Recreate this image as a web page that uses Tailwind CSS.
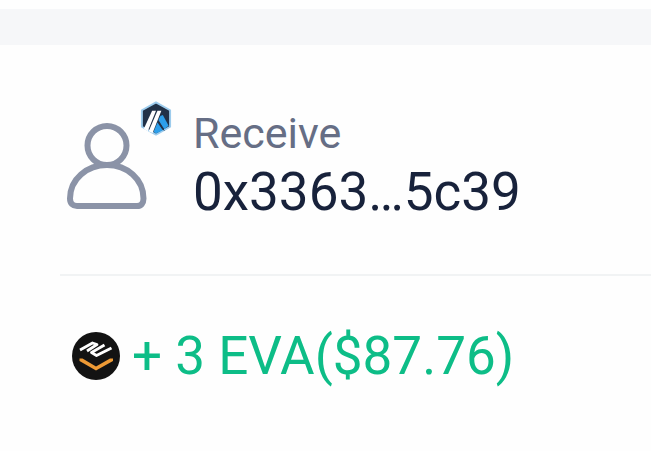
<!DOCTYPE html>
<html lang="en">
<head>
    <meta charset="UTF-8">
    <meta name="viewport" content="width=device-width, initial-scale=1.0">
    <title>Transaction - Receive</title>
    <script src="https://cdn.jsdelivr.net/npm/@tailwindcss/browser@4"></script>
</head>
<body class="bg-[#fefefe] font-['Roboto',sans-serif]">
    <div class="mt-[9px] h-9 bg-[#f6f7f9]"></div>
    <main class="pl-[60px]">
        <section class="flex items-center gap-[46px] border-b-2 border-[#f1f3f4] pl-[7px] pt-[62px] pb-[49px]">
            <div class="relative shrink-0">
                <svg class="h-[87px] w-20" viewBox="0 0 80 87" fill="none" stroke="#8b93a7" stroke-width="6" aria-hidden="true">
                    <circle cx="40" cy="22.500" r="19.500"/>
                    <path d="M40 42C60 42 76.500 56 76.500 75.500C76.500 80.500 74 83 70 83H10C6 83 3 80.500 3 75.500C3 56 20 42 40 42Z"/>
                </svg>
                <!-- network badge -->
                <svg class="absolute -top-[22px] left-[73px] h-[35px] w-8" viewBox="0 0 32 36" aria-hidden="true">
                    <path d="M16 1.500L30.500 9.500V26.500L16 34.500L1.500 26.500V9.500Z" fill="#213147" stroke="#9dcced" stroke-width="2" stroke-linejoin="round"/>
                    <path d="M20.500 15.500L23 14.500L29 25.500L24.500 29L18.500 19.500Z" fill="#2d9fea"/>
                    <path d="M17.500 22L23 30L16 33.500L13.500 31.500Z" fill="#2d9fea"/>
                    <path d="M18 20.500L24.500 30.500" stroke="#213147" stroke-width="1"/>
                    <path d="M12 10H16L7.500 31L3.500 28.500Z" fill="#fff"/>
                    <path d="M17.500 10H21.500L12.500 33L8.500 31Z" fill="#fff"/>
                </svg>
            </div>
            <div>
                <h1 class="text-[43px] leading-[52px] text-[#666e85]">Receive</h1>
                <p class="text-[53px] leading-[66px] text-[#18223b]">0x3363…5c39</p>
            </div>
        </section>
        <section class="flex items-center gap-3 pl-3 pt-12">
            <svg class="size-12 shrink-0" viewBox="0 0 48 48" aria-hidden="true">
                <circle cx="24" cy="24" r="24" fill="#131313"/>
                <g fill="none" stroke="#fff" stroke-width="2.800" stroke-linejoin="round">
                    <path d="M8 18L20.500 11L25 12.500L15 19"/>
                    <path d="M32.500 13L19.500 20.500L24.500 23.500L39.500 16"/>
                </g>
                <path d="M7.500 26.500H10.500L24 34.500L38 26.500H41V29L24 38.500L7.500 29Z" fill="#ee9a35"/>
            </svg>
            <p class="text-[53px] leading-[64px] text-[#0dbd87]">+ 3 EVA($87.76)</p>
        </section>
    </main>
</body>
</html>
